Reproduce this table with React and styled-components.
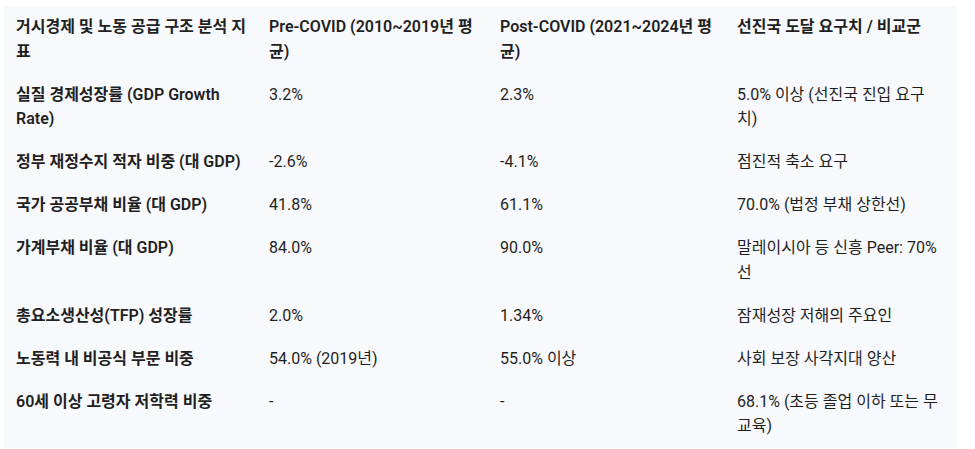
import styled, { createGlobalStyle } from 'styled-components';

const GlobalStyle = createGlobalStyle`
  html, body {
    margin: 0;
    padding: 0;
    background: #ffffff;
  }
  body {
    font-family: 'Roboto', 'Noto Sans CJK KR', sans-serif;
    color: #1f1f1f;
  }
`;

const columns = [253, 231, 237, 232];

const headers = [
  '거시경제 및 노동 공급 구조 분석 지표',
  'Pre-COVID (2010~2019년 평균)',
  'Post-COVID (2021~2024년 평균)',
  '선진국 도달 요구치 / 비교군',
];

const rows = [
  ['실질 경제성장률 (GDP Growth Rate)', '3.2%', '2.3%', '5.0% 이상 (선진국 진입 요구치)'],
  ['정부 재정수지 적자 비중 (대 GDP)', '-2.6%', '-4.1%', '점진적 축소 요구'],
  ['국가 공공부채 비율 (대 GDP)', '41.8%', '61.1%', '70.0% (법정 부채 상한선)'],
  ['가계부채 비율 (대 GDP)', '84.0%', '90.0%', '말레이시아 등 신흥 Peer: 70% 선'],
  ['총요소생산성(TFP) 성장률', '2.0%', '1.34%', '잠재성장 저해의 주요인'],
  ['노동력 내 비공식 부문 비중', '54.0% (2019년)', '55.0% 이상', '사회 보장 사각지대 양산'],
  ['60세 이상 고령자 저학력 비중', '-', '-', '68.1% (초등 졸업 이하 또는 무교육)'],
];

const Page = styled.div`
  padding: 6px 18px 0 4px;
`;

const Panel = styled.div`
  background: #f8f9fc;
  width: 953px;
`;

const Table = styled.table`
  border-collapse: collapse;
  table-layout: fixed;
  width: 100%;
  font-size: 16px;
  line-height: 24.5px;
`;

const Cell = styled.td`
  padding: 9.25px 12px;
  vertical-align: top;
  text-align: left;
  font-weight: ${({ $strong }) => ($strong ? 600 : 400)};
  color: #1f1f1f;
`;

const HeadCell = styled(Cell).attrs({ as: 'th' })`
  font-weight: 600;

  &:first-child {
    padding-right: 6px;
  }
`;

export default function App() {
  return (
    <>
      <GlobalStyle />
      <Page>
        <Panel>
          <Table>
            <colgroup>
              {columns.map((w, i) => (
                <col key={i} style={{ width: w }} />
              ))}
            </colgroup>
            <thead>
              <tr>
                {headers.map((h) => (
                  <HeadCell key={h}>{h}</HeadCell>
                ))}
              </tr>
            </thead>
            <tbody>
              {rows.map((r) => (
                <tr key={r[0]}>
                  {r.map((c, i) => (
                    <Cell key={i} $strong={i === 0}>
                      {c}
                    </Cell>
                  ))}
                </tr>
              ))}
            </tbody>
          </Table>
        </Panel>
      </Page>
    </>
  );
}
